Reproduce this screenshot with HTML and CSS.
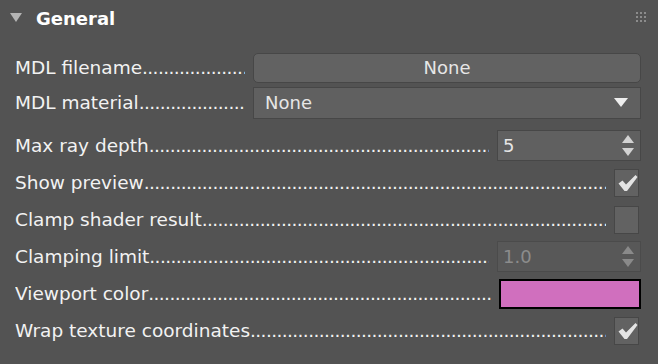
FILE: index.html
```html
<!DOCTYPE html>
<html lang="en">
<head>
    <meta charset="UTF-8">
    <meta name="viewport" content="width=device-width, initial-scale=1.0">
    <title>General</title>
    <link rel="stylesheet" href="styles.css">
</head>
<body>
    <div class="panel">
        <div class="panel-header">
            <span class="caret"></span>
            <h2>General</h2>
            <span class="grip">
                <i></i><i></i><i></i>
                <i></i><i></i><i></i>
                <i></i><i></i><i></i>
            </span>
        </div>

        <div class="group group-top">
            <div class="row">
                <span class="label">MDL filename</span>
                <button class="btn wide">None</button>
            </div>
            <div class="row">
                <span class="label">MDL material</span>
                <div class="select wide">
                    <span>None</span>
                    <span class="select-arrow"></span>
                </div>
            </div>
        </div>

        <div class="group">
            <div class="row">
                <span class="label">Max ray depth</span>
                <div class="spinner">
                    <span>5</span>
                    <span class="spin-arrows"><i class="up"></i><i class="down"></i></span>
                </div>
            </div>
            <div class="row">
                <span class="label">Show preview</span>
                <span class="checkbox checked">
                    <svg viewBox="0 0 20 18" width="20" height="18"><path d="M0.5 9.5 L4.5 6.5 L8 10.5 L17.5 1 L19.5 3 L9 17 L6.5 17 Z" fill="#e4e4e4"/></svg>
                </span>
            </div>
            <div class="row">
                <span class="label">Clamp shader result</span>
                <span class="checkbox"></span>
            </div>
            <div class="row">
                <span class="label">Clamping limit</span>
                <div class="spinner disabled">
                    <span>1.0</span>
                    <span class="spin-arrows"><i class="up"></i><i class="down"></i></span>
                </div>
            </div>
            <div class="row">
                <span class="label">Viewport color</span>
                <div class="swatch"></div>
            </div>
            <div class="row">
                <span class="label">Wrap texture coordinates</span>
                <span class="checkbox checked">
                    <svg viewBox="0 0 20 18" width="20" height="18"><path d="M0.5 9.5 L4.5 6.5 L8 10.5 L17.5 1 L19.5 3 L9 17 L6.5 17 Z" fill="#e4e4e4"/></svg>
                </span>
            </div>
        </div>
    </div>
</body>
</html>
```

FILE: styles.css
```css
body {
    margin: 0;
    background: #535353;
    font-family: "DejaVu Sans", sans-serif;
    color: #f2f2f2;
}
.panel {
    width: 658px;
    height: 364px;
}
.panel-header {
    display: flex;
    align-items: center;
    height: 36px;
    padding: 0 12px 0 10px;
}
.caret {
    width: 0;
    height: 0;
    border-left: 6.5px solid transparent;
    border-right: 6.5px solid transparent;
    border-top: 9px solid #b4b4b4;
    margin-top: -2px;
}
h2 {
    margin: 0 0 0 14px;
    font-size: 18px;
    font-weight: bold;
    color: #ffffff;
    flex: 1;
}
.grip {
    display: grid;
    grid-template-columns: repeat(3, 2px);
    gap: 2px;
    margin-top: -2px;
}
.grip i {
    width: 2px;
    height: 2px;
    background: #8c8c8c;
}
.group {
    padding: 0 17px 0 15px;
    margin-top: 7px;
}
.group-top {
    margin-top: 14px;
}
.row {
    display: flex;
    align-items: center;
    height: 37px;
}
.group-top .row {
    height: 35px;
}
.label {
    flex: 1;
    overflow: hidden;
    white-space: nowrap;
    font-size: 18.5px;
    margin-right: 8px;
    margin-top: -1px;
}
.label::after {
    content: "........................................................................................................................";
    letter-spacing: -0.6px;
}
.wide {
    width: 388px;
    box-sizing: border-box;
}
.btn {
    height: 30px;
    background: #626262;
    border: 1px solid #474747;
    border-radius: 5px;
    color: #e6e6e6;
    font-family: inherit;
    font-size: 18px;
    padding: 0;
}
.select {
    height: 32px;
    background: #606060;
    border: 1px solid #474747;
    display: flex;
    align-items: center;
    justify-content: space-between;
    padding: 0 12px 0 11px;
    font-size: 18px;
    color: #e6e6e6;
}
.select-arrow {
    width: 0;
    height: 0;
    border-left: 7px solid transparent;
    border-right: 7px solid transparent;
    border-top: 9px solid #eeeeee;
}
.spinner {
    width: 144px;
    height: 31px;
    box-sizing: border-box;
    background: #606060;
    border: 1px solid #474747;
    display: flex;
    align-items: center;
    justify-content: space-between;
    padding: 0 6px 0 5px;
    font-size: 18px;
    color: #e6e6e6;
}
.spin-arrows {
    display: flex;
    flex-direction: column;
    gap: 5px;
}
.spin-arrows i {
    width: 0;
    height: 0;
    border-left: 6px solid transparent;
    border-right: 6px solid transparent;
}
.spin-arrows .up {
    border-bottom: 8px solid #d2d2d2;
}
.spin-arrows .down {
    border-top: 8px solid #d2d2d2;
}
.spinner.disabled {
    background: #585858;
    border-color: #4b4b4b;
    color: #8c8c8c;
}
.spinner.disabled .up {
    border-bottom-color: #8a8a8a;
}
.spinner.disabled .down {
    border-top-color: #8a8a8a;
}
.checkbox {
    width: 25px;
    height: 28px;
    box-sizing: border-box;
    background: #626262;
    border: 1px solid #474747;
    margin-right: 2px;
    display: flex;
    align-items: center;
    justify-content: center;
}
.checkbox svg {
    margin-left: 2px;
}
.swatch {
    width: 142px;
    height: 30px;
    box-sizing: border-box;
    background: #d06fbe;
    border: 2px solid #000000;
}
```
